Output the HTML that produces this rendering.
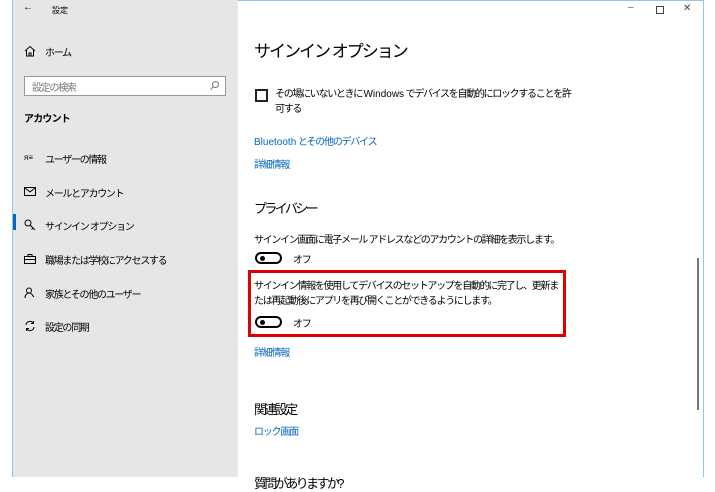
<!DOCTYPE html><html><head><meta charset="utf-8"><style>
body{margin:0;width:715px;height:477px;background:#fff;position:relative;overflow:hidden;font-family:"Liberation Sans","Noto Sans CJK JP",sans-serif;color:#000}
.a{position:absolute;white-space:nowrap}
.s{font-size:10px;letter-spacing:-1.3px}
.l{color:#0067c0;font-size:10px;letter-spacing:-1.2px}
.h{font-size:13px;letter-spacing:-2.6px}
.n{letter-spacing:0}
.tg{position:absolute;width:27px;height:12px;border:2px solid #000;border-radius:8px;box-sizing:border-box}
.tg:after{content:"";position:absolute;left:3px;top:2px;width:5px;height:5px;border-radius:50%;background:#000}
</style></head><body>
<div class="a" style="left:12px;top:0;width:692px;height:477px;border:1px solid #9cc3e6;border-bottom:none;box-sizing:border-box"></div>
<div class="a" style="left:13px;top:0;width:225px;height:477px;background:#e6e6e6"></div>
<div class="a" style="left:23px;top:2px;font-size:10px">←</div>
<div class="a" style="left:52px;top:5px;font-size:8px">設定</div>
<div class="a" style="left:628px;top:2px;font-size:10px;color:#555">–</div>
<div class="a" style="left:656px;top:6px;width:6px;height:6px;border:1px solid #444"></div>
<div class="a" style="left:683px;top:3px;font-size:10px;color:#444">✕</div>
<svg class="a" style="left:24px;top:45px" width="12" height="12" viewBox="0 0 12 12" fill="none" stroke="#000"><path d="M1 6L6 1.5 11 6M2.5 5v6h7V5M5 11V8h2v3"/></svg>
<div class="a s" style="left:45px;top:44px">ホーム</div>
<div class="a" style="left:24px;top:76px;width:202px;height:20px;border:1px solid #999;background:#fff;box-sizing:border-box"></div>
<div class="a s" style="left:32px;top:79px;color:#777">設定の検索</div>
<svg class="a" style="left:209px;top:80px" width="11" height="11" viewBox="0 0 11 11" fill="none" stroke="#777"><circle cx="6.5" cy="4.5" r="3"/><path d="M4.5 6.5L1.5 9.5"/></svg>
<div class="a" style="left:24px;top:110px;font-size:10px;font-weight:bold;letter-spacing:-0.8px">アカウント</div>
<div class="a" style="left:24px;top:153px;font-size:8px">ᴙ≡</div><div class="a s" style="left:45px;top:151px">ユーザーの情報</div>
<svg class="a" style="left:24px;top:187px" width="12" height="9" viewBox="0 0 12 9" fill="none" stroke="#000"><rect x=".5" y=".5" width="11" height="8"/><path d="M.5 .5L6 5l5.5-4.5"/></svg><div class="a s" style="left:45px;top:185px">メールとアカウント</div>
<div class="a" style="left:13px;top:214px;width:3px;height:16px;background:#0067c0"></div>
<svg class="a" style="left:24px;top:219px" width="12" height="12" viewBox="0 0 12 12" fill="none" stroke="#000"><circle cx="4" cy="4" r="3"/><path d="M6 6l5 5M9 9l-1.5 1.5"/></svg><div class="a s" style="left:45px;top:218px">サインイン オプション</div>
<svg class="a" style="left:24px;top:254px" width="12" height="10" viewBox="0 0 12 10" fill="none" stroke="#000"><rect x=".5" y="2.5" width="11" height="7"/><path d="M4 2.5V.5h4v2M.5 5.5h11"/></svg><div class="a s" style="left:45px;top:252px">職場または学校にアクセスする</div>
<svg class="a" style="left:24px;top:287px" width="12" height="12" viewBox="0 0 12 12" fill="none" stroke="#000"><circle cx="5" cy="3.5" r="2.5"/><path d="M1 11c0-3 2-5 4-5s3 1 4 3l1 1"/></svg><div class="a s" style="left:45px;top:286px">家族とその他のユーザー</div>
<svg class="a" style="left:24px;top:320px" width="12" height="12" viewBox="0 0 12 12" fill="none" stroke="#000"><path d="M2 5a4 4 0 0 1 7.5-1.5M10 7a4 4 0 0 1-7.5 1.5M9.5 1v2.5H7M2.5 11V8.5H5"/></svg><div class="a s" style="left:45px;top:319px">設定の同期</div>
<div class="a" style="left:254px;top:37px;font-size:17px;letter-spacing:-2px">サインイン オプション</div>
<div class="a" style="left:255px;top:89px;width:13px;height:13px;border:2px solid #222;box-sizing:border-box"></div>
<div class="a s" style="left:275px;top:87px;line-height:15px">その場にいないときに <span class="n">Windows</span> でデバイスを自動的にロックすることを許<br>可する</div>
<div class="a l" style="left:254px;top:133px"><span class="n">Bluetooth</span> とその他のデバイス</div>
<div class="a l" style="left:254px;top:156px">詳細情報</div>
<div class="a h" style="left:254px;top:198px">プライバシー</div>
<div class="a s" style="left:254px;top:231px">サインイン画面に電子メール アドレスなどのアカウントの詳細を表示します。</div>
<div class="tg" style="left:255px;top:252px"></div><div class="a s" style="left:293px;top:251px">オフ</div>
<div class="a" style="left:248px;top:270px;width:318px;height:67px;border:3px solid #e00000;box-sizing:border-box"></div>
<div class="a s" style="left:254px;top:279px;line-height:15px">サインイン情報を使用してデバイスのセットアップを自動的に完了し、更新ま<br>たは再起動後にアプリを再び開くことができるようにします。</div>
<div class="tg" style="left:255px;top:316px"></div><div class="a s" style="left:293px;top:315px">オフ</div>
<div class="a l" style="left:254px;top:344px">詳細情報</div>
<div class="a h" style="left:254px;top:399px">関連設定</div>
<div class="a l" style="left:254px;top:423px">ロック画面</div>
<div class="a h" style="left:254px;top:473px">質問がありますか?</div>
<div class="a" style="left:697px;top:258px;width:2px;height:152px;background:#777"></div>
</body></html>
